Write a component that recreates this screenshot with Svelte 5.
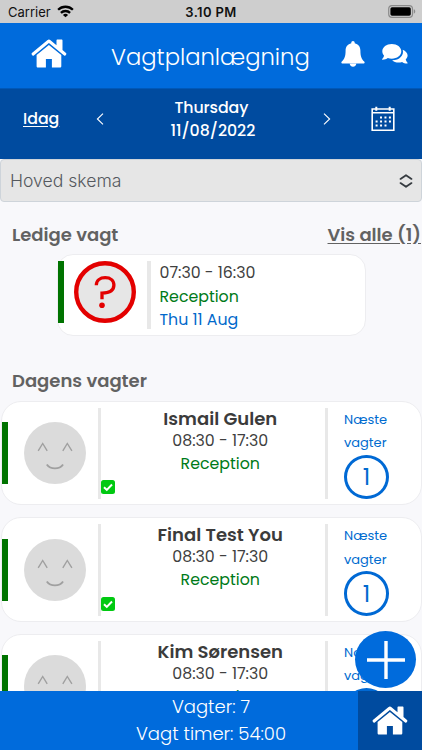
<script lang="ts">
  interface Shift {
    name: string;
    time: string;
    place: string;
    next: number;
  }

  const shifts: Shift[] = [
    { name: 'Ismail Gulen', time: '08:30 - 17:30', place: 'Reception', next: 1 },
    { name: 'Final Test You', time: '08:30 - 17:30', place: 'Reception', next: 1 },
    { name: 'Kim Sørensen', time: '08:30 - 17:30', place: 'Reception', next: 1 },
  ];
</script>

{#snippet house()}
  <svg class="house" width="36" height="30" viewBox="0 0 36 30" fill="currentColor" aria-hidden="true">
    <path d="M17.9.6c-.6 0-1.100.2-1.600.6L.9 14.100c-.5.4-.5.9-.2 1.300l.8 1c.4.4.9.4 1.300.1L17.900 4.100l15.200 12.400c.5.3 1 .3 1.300-.1l.8-1c.3-.4.3-.9-.2-1.300l-3.500-3V1.600c0-.6-.4-1-1-1h-4c-.6 0-1 .4-1 1v4.600l-6-5c-.5-.4-1-.6-1.600-.6z" />
    <path d="M17.900 6 5.600 16.100v11.100c0 .9.600 1.400 1.400 1.400h7.900V20h6v8.600h8c.8 0 1.400-.5 1.400-1.400V16.100z" />
  </svg>
{/snippet}

<div class="app">
  <div class="status">
    <div class="carrier">
      <span>Carrier</span>
      <svg width="17" height="13" viewBox="0 0 17 13" fill="none" stroke="#000" stroke-width="2.300" aria-hidden="true">
        <path d="M1.100 4.800a10.500 10.500 0 0 1 14.800 0" />
        <path d="M3.900 7.900a6.500 6.500 0 0 1 9.200 0" />
        <path d="M8.500 12.300 5.900 9.900a3.800 3.800 0 0 1 5.200 0z" fill="#000" stroke="none" />
      </svg>
    </div>
    <span class="clock">3.10 PM</span>
    <svg class="battery" width="28" height="13" viewBox="0 0 28 13" aria-hidden="true">
      <rect x=".7" y=".7" width="23.800" height="11.600" rx="3.300" fill="none" stroke="#8b8b8b" stroke-width="1.200" />
      <rect x="2.400" y="2.300" width="20.400" height="8.400" rx="1.600" />
      <path d="M25.800 4.300c1.900.6 1.900 3.800 0 4.400z" fill="#8b8b8b" />
    </svg>
  </div>

  <header class="topbar">
    <button class="plain" aria-label="Hjem">{@render house()}</button>
    <h1>Vagtplanlægning</h1>
    <button class="plain bell" aria-label="Notifikationer">
      <svg width="24" height="26" viewBox="0 0 24 26" fill="currentColor" aria-hidden="true">
        <path d="M12 0c-1 0-1.700.8-1.700 1.700v.5C6.700 3 4.600 5.900 4.600 9.500c0 6.500-1.400 8.700-3.800 11-.9.9-.3 2.100.8 2.100h20.800c1.100 0 1.700-1.200.8-2.100-2.400-2.300-3.800-4.500-3.800-11 0-3.600-2.100-6.500-5.700-7.300v-.5C13.700.8 13 0 12 0z" />
        <path d="M8.700 22.500h6.600c0 1.900-1.400 3.300-3.300 3.300s-3.300-1.400-3.300-3.300z" />
      </svg>
    </button>
    <button class="plain chat" aria-label="Beskeder">
      <svg width="27" height="22" viewBox="0 0 27 22" fill="currentColor" aria-hidden="true">
        <path d="M10.800 1C5.500 1 1.300 4.200 1.300 8.300c0 1.700.7 3.200 1.800 4.400-.3 1.200-1.100 2.300-1.900 3.200-.3.300-.1.900.4.900 2 0 3.900-.8 5.200-1.700 1.200.4 2.500.6 4 .6 5.300 0 9.500-3.300 9.500-7.400S16.100 1 10.800 1z" />
        <path d="M21.700 6.800c1.600 5.700-3.400 10.600-10.600 10.500 1.600 1.500 3.900 2.300 6.400 2.300 1.300 0 2.500-.2 3.600-.6 1.400.9 3 1.600 5 1.600.5 0 .7-.5.400-.9-.8-.8-1.500-1.800-1.800-3.100 1.200-1.200 1.900-2.500 1.900-4 0-2.500-2-4.700-4.900-5.800z" />
      </svg>
    </button>
  </header>

  <nav class="datebar">
    <a class="today" href="#today">Idag</a>
    <svg width="8" height="12" viewBox="0 0 8 12" fill="none" stroke="currentColor" stroke-width="1.100" aria-hidden="true">
      <path d="M7 .7 1.400 6 7 11.300" />
    </svg>
    <div class="date">
      <span class="day">Thursday</span>
      <span>11/08/2022</span>
    </div>
    <svg width="8" height="12" viewBox="0 0 8 12" fill="none" stroke="currentColor" stroke-width="1.100" aria-hidden="true">
      <path d="M1 .7 6.600 6 1 11.300" />
    </svg>
    <svg class="calendar" width="24" height="26" viewBox="0 0 24 26" fill="none" stroke="currentColor" aria-hidden="true">
      <path d="M1.200 3h21.600v21.300H1.200zM1 6.800h22" stroke-width="1.600" />
      <path d="M5.300 .8v4M18.700 .8v4" stroke-width="2" />
      <path d="M9 11.500h11M4.600 15.500h15.400M4.600 19.500h11.200" stroke-width="2" stroke-dasharray="2 2.450" />
    </svg>
  </nav>

  <div class="select">
    <span>Hoved skema</span>
    <svg width="14" height="14" viewBox="0 0 14 14" fill="none" stroke="#363b40" stroke-width="1.800" stroke-linecap="round" stroke-linejoin="round" aria-hidden="true">
      <path d="M1.500 4.900 7 1.200l5.500 3.700M1.500 9.100 7 12.800l5.500-3.700" />
    </svg>
  </div>

  <main>
    <div class="section-head">
      <h2>Ledige vagt</h2>
      <a href="#all">Vis alle (1)</a>
    </div>

    <article class="open-card">
      <span class="bar"></span>
      <svg class="unknown" width="62" height="62" viewBox="0 0 62 62" fill="none" stroke="#e30000" aria-hidden="true">
        <circle cx="31" cy="31" r="28.800" fill="#e6e6e6" stroke-width="4.400" />
        <path d="M22.300 24.200c.1-4.700 3.700-7.500 8.900-7.500 5.300 0 8.700 2.800 8.700 7.300 0 5-4.400 8-11.900 8.200v6" stroke-width="3.300" />
        <circle cx="28" cy="44.300" r="2.800" fill="#e30000" stroke="none" />
      </svg>
      <span class="rule"></span>
      <div class="open-info">
        <span class="time">07:30 - 16:30</span>
        <span class="place">Reception</span>
        <span class="when">Thu 11 Aug</span>
      </div>
    </article>

    <h2 class="today-head">Dagens vagter</h2>

    {#each shifts as shift}
      <article class="shift">
        <span class="bar"></span>
        <svg class="face" width="62" height="62" viewBox="0 0 62 62" fill="none" stroke="#a0a0a0" aria-hidden="true">
          <circle cx="31" cy="31" r="31" fill="#dbdbdb" stroke="none" />
          <path d="M14.200 28.800 18.700 21.500l4.500 7.300M38.800 28.800l4.500-7.300 4.600 7.300" stroke-width="1.400" />
          <path d="M22.800 42.500c3.800 5.200 12.500 5.200 16.300 0" stroke-width="1.900" />
        </svg>
        <div class="rule marked">
          <svg class="check" width="14" height="14" viewBox="0 0 14 14" aria-hidden="true">
            <rect width="14" height="14" rx="2.500" fill="#00c911" />
            <path d="m3 7.200 2.800 2.700L11 4.500" fill="none" stroke="#fff" stroke-width="2" />
          </svg>
        </div>
        <div class="info">
          <strong>{shift.name}</strong>
          <span class="time">{shift.time}</span>
          <span class="place">{shift.place}</span>
        </div>
        <span class="rule"></span>
        <div class="next">
          <span class="label">Næste</span>
          <span class="label">vagter</span>
          <span class="count">{shift.next}</span>
        </div>
      </article>
    {/each}
  </main>

  <footer>
    <div class="totals">
      <span>Vagter: 7</span>
      <span>Vagt timer: 54:00</span>
    </div>
    <button class="home" aria-label="Hjem">{@render house()}</button>
  </footer>

  <button class="fab" aria-label="Tilføj vagt">
    <svg width="40" height="40" viewBox="0 0 40 40" stroke="currentColor" stroke-width="3.400" aria-hidden="true">
      <path d="M20 1v38M1 20h38" />
    </svg>
  </button>
</div>

<style>
  :global(body) {
    margin: 0;
  }

  .app {
    position: relative;
    display: flex;
    flex-direction: column;
    width: 422px;
    height: 750px;
    overflow: hidden;
    background: #f8f8fb;
    color: #3b3b3b;
    font-family: Poppins, Inter, sans-serif;
    font-size: 15.8px;
  }

  svg {
    display: block;
    flex-shrink: 0;
  }

  h1,
  h2 {
    margin: 0;
  }

  button {
    padding: 0;
    border: none;
    color: #fff;
    cursor: pointer;
  }

  .plain {
    background: transparent;
  }

  .status {
    display: grid;
    grid-template-columns: 1fr auto 1fr;
    align-items: center;
    box-sizing: border-box;
    height: 23px;
    padding: 0 6px 0 8px;
    background: #cecece;
    color: #111;
    font-family: Inter, sans-serif;
    font-size: 13px;
  }

  .carrier {
    display: flex;
    align-items: center;
    gap: 6px;
  }

  .clock {
    margin-right: 2px;
    font-weight: 600;
    letter-spacing: 0.4px;
  }

  .battery {
    justify-self: end;
  }

  .topbar {
    display: flex;
    align-items: center;
    box-sizing: border-box;
    height: 66px;
    padding: 0 13px 0 31px;
    border-bottom: 1px solid #0058b8;
    background: #006bdc;
    color: #fff;
  }

  .topbar h1 {
    width: 198px;
    margin: 2px 32px 0 44px;
    font-size: 22.7px;
    font-weight: 300;
    white-space: nowrap;
  }

  .topbar .plain {
    margin-top: -4px;
  }

  .topbar .chat {
    margin: -4px 0 0 16px;
  }

  .datebar {
    display: flex;
    align-items: center;
    box-sizing: border-box;
    height: 70px;
    padding: 0 27px 11px 23px;
    background: #004b9f;
    color: #fff;
    font-weight: 500;
  }

  .today {
    width: 73px;
    color: inherit;
    text-underline-offset: 2px;
  }

  .date {
    display: flex;
    flex-direction: column;
    align-items: center;
    width: 219px;
    margin-right: 1px;
    line-height: 23px;
  }

  .day {
    margin-right: 3px;
    letter-spacing: -0.1px;
  }

  .calendar {
    margin-left: 40px;
  }

  .select {
    display: flex;
    align-items: center;
    justify-content: space-between;
    box-sizing: border-box;
    height: 43px;
    padding: 0 8px 0 9px;
    border: 1px solid #ced4da;
    border-radius: 4px;
    background: #e6e6e6;
    color: #55595e;
    font-family: Inter, sans-serif;
    font-size: 17.6px;
    font-weight: 300;
  }

  main {
    flex: 1;
    min-height: 0;
    overflow: hidden;
  }

  .section-head {
    display: flex;
    justify-content: space-between;
    height: 31px;
    padding: 21px 1px 0 12px;
    white-space: nowrap;
  }

  h2,
  .section-head a {
    color: #626262;
    font-size: 18px;
    font-weight: 600;
    line-height: 24px;
  }

  .section-head a {
    text-underline-offset: 2px;
  }

  .bar {
    flex-shrink: 0;
    background: #007300;
  }

  .rule {
    flex-shrink: 0;
    width: 3.5px;
    background: #e8e8e8;
  }

  .time {
    color: #404040;
  }

  .place {
    color: #007a18;
  }

  .open-card {
    display: flex;
    box-sizing: border-box;
    width: 309px;
    height: 82px;
    margin-left: 57px;
    padding: 6px 0;
    border: 1px solid #ededf0;
    border-radius: 16px;
    background: #fff;
  }

  .open-card .bar {
    width: 6px;
    height: 62px;
  }

  .unknown {
    margin: 0 11px 0 10px;
  }

  .open-info {
    display: flex;
    flex-direction: column;
    margin-left: 9px;
    line-height: 23.5px;
  }

  .when {
    color: #0069cb;
  }

  .today-head {
    padding: 33px 0 0 12px;
    margin-bottom: 7.5px;
  }

  .shift {
    display: flex;
    box-sizing: border-box;
    height: 104.7px;
    margin: 0 0 12px 1px;
    padding: 6px 0 5px;
    border: 1px solid #ededf0;
    border-radius: 20px;
    background: #fff;
  }

  .shift .bar {
    align-self: center;
    width: 5.5px;
    height: 62px;
    margin-bottom: 1px;
  }

  .face {
    align-self: center;
    margin: 0 12px 1px 16px;
  }

  .marked {
    position: relative;
  }

  .check {
    position: absolute;
    left: 3px;
    bottom: 5px;
  }

  .info {
    display: flex;
    flex-direction: column;
    align-items: center;
    box-sizing: border-box;
    width: 223.5px;
    padding-left: 15px;
    line-height: 23px;
  }

  .info strong {
    font-size: 18px;
    font-weight: 600;
    line-height: 21px;
  }

  .next {
    display: flex;
    flex-direction: column;
    align-items: flex-start;
    margin-left: 16px;
    color: #006bcf;
  }

  .label {
    font-size: 13px;
    line-height: 23.5px;
  }

  .count {
    display: flex;
    align-items: center;
    justify-content: center;
    box-sizing: border-box;
    width: 45px;
    height: 45px;
    border: 3px solid #0069d4;
    border-radius: 50%;
    font-size: 23.5px;
  }

  footer {
    display: flex;
    height: 59px;
    background: #006bdc;
    color: #fff;
  }

  .totals {
    display: flex;
    flex: 1;
    flex-direction: column;
    align-items: center;
    padding: 2px 0 0 64px;
    font-size: 18px;
    font-weight: 300;
    line-height: 27px;
  }

  .home {
    display: flex;
    align-items: center;
    justify-content: center;
    width: 64px;
    background: #004b9f;
  }

  .fab {
    position: absolute;
    right: 6px;
    bottom: 62px;
    display: flex;
    align-items: center;
    justify-content: center;
    width: 61px;
    height: 57px;
    border-radius: 50%;
    background: #006bdc;
  }
</style>
